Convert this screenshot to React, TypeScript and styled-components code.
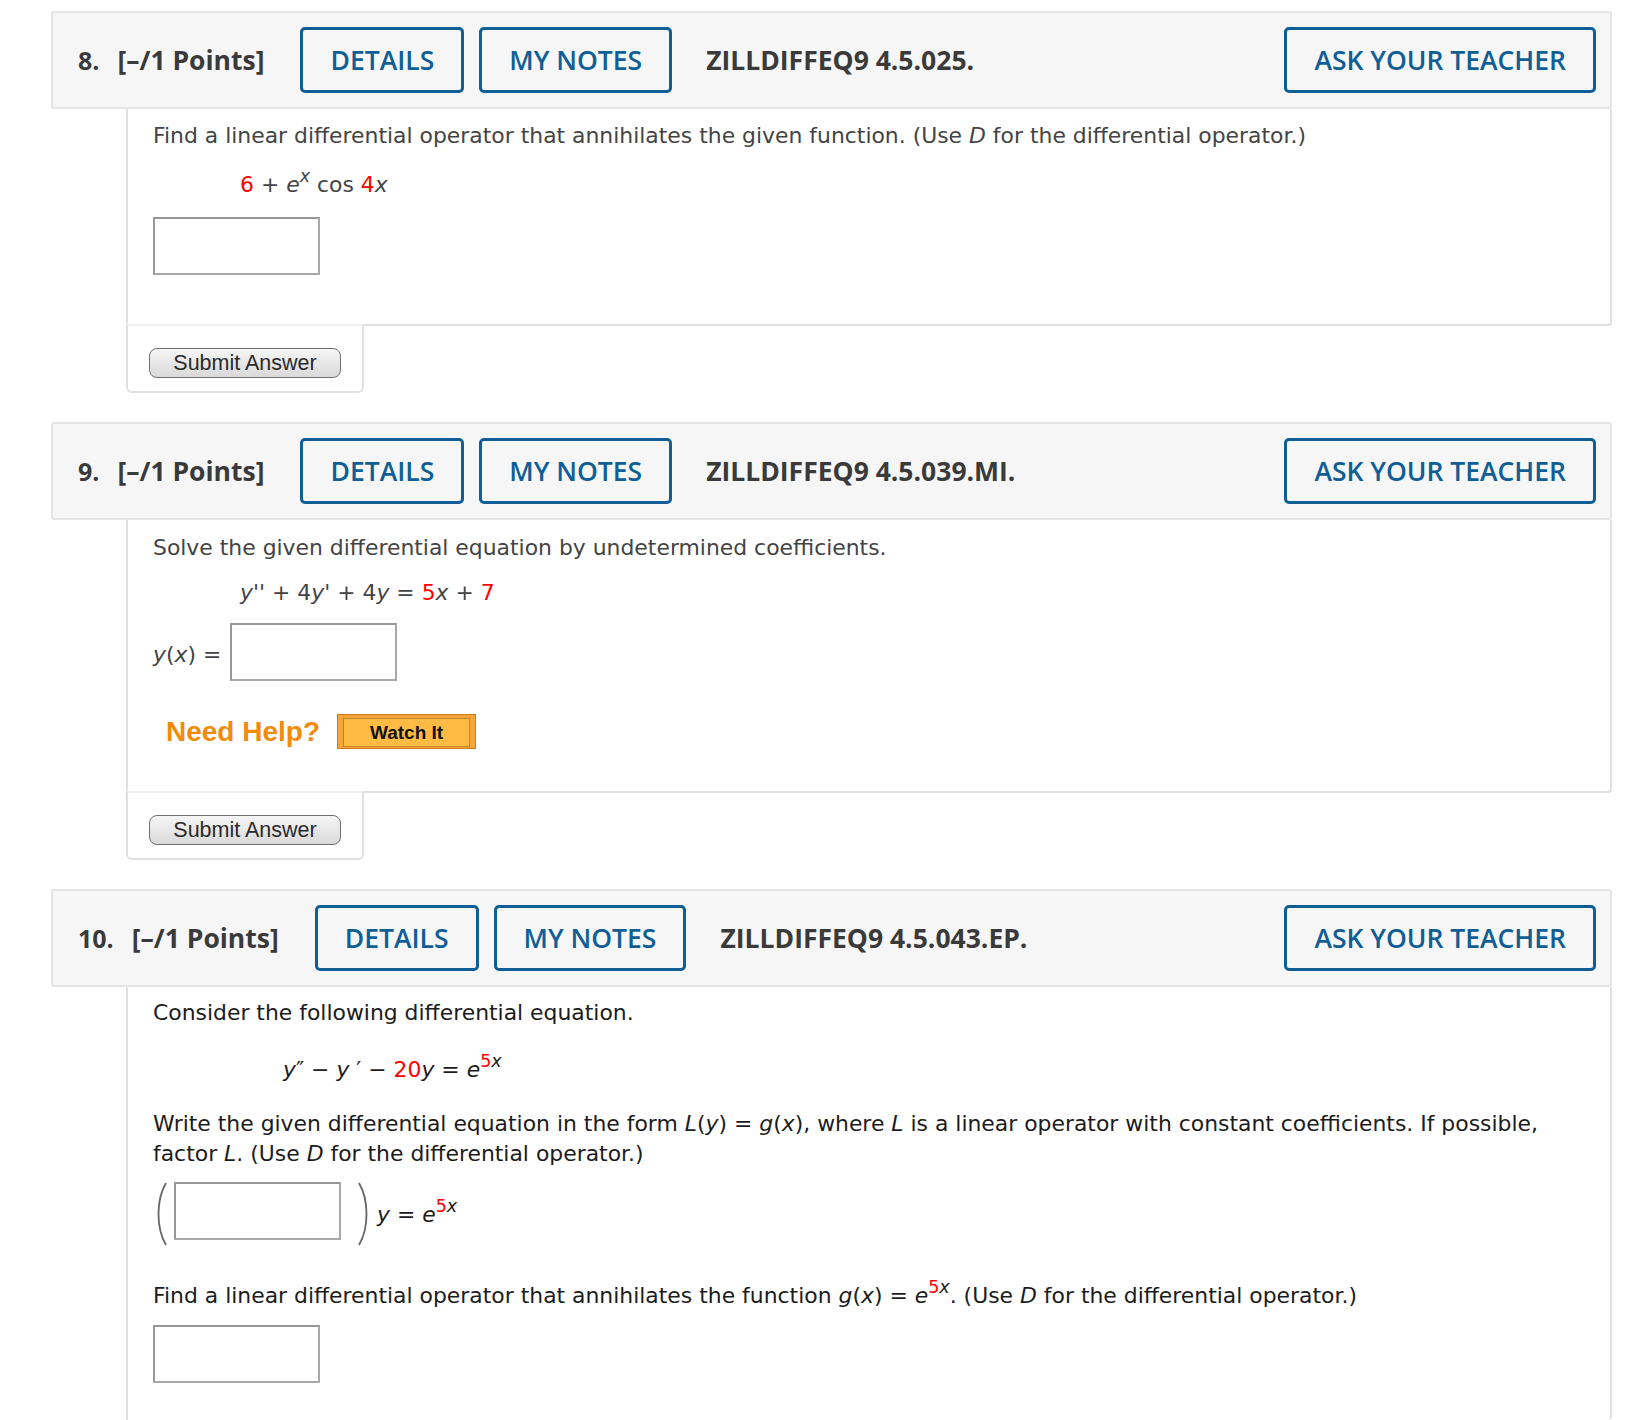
import React from 'react';
import styled, { createGlobalStyle } from 'styled-components';

const Global = createGlobalStyle`
  html, body {
    margin: 0;
    padding: 0;
    background: #fff;
  }
`;

const Page = styled.div`
  width: 1561px;
  padding: 11px 0 0 51px;
`;

const Question = styled.section`
  margin-bottom: 29px;
`;

const Header = styled.header`
  box-sizing: border-box;
  height: 98px;
  display: flex;
  align-items: center;
  padding: 0 14px 0 25px;
  background: #f6f6f6;
  border: 2px solid #e4e4e4;
  border-radius: 3px;
  font-family: 'Open Sans', 'DejaVu Sans', sans-serif;
  color: #3a3a3a;
`;

const QNum = styled.span`
  font-size: 25px;
  font-weight: 700;
  margin-right: 18px;
`;

const Points = styled.span`
  font-size: 26.5px;
  font-weight: 700;
  margin-right: 36px;
`;

const OutlineButton = styled.button<{ $right?: boolean }>`
  box-sizing: border-box;
  height: 66px;
  padding: 0 27px;
  margin-right: ${(p) => (p.$right ? '0' : '15px')};
  margin-left: ${(p) => (p.$right ? 'auto' : '0')};
  background: transparent;
  border: 3px solid #0f5e95;
  border-radius: 5px;
  color: #0f5e95;
  font-family: 'Open Sans', 'DejaVu Sans', sans-serif;
  font-size: 26.5px;
  font-weight: 600;
`;

const Code = styled.span`
  margin-left: 19px;
  font-size: 26.5px;
  font-weight: 700;
  color: #3a3a3a;
`;

const Body = styled.div<{ $dark?: boolean; $last?: boolean; $pt: number; $pb: number }>`
  margin-left: 75px;
  padding: ${(p) => p.$pt}px 25px ${(p) => p.$pb}px 25px;
  border: 2px solid #e0e0e0;
  border-top: none;
  ${(p) => (p.$last ? 'border-bottom: none;' : '')}
  border-radius: 0 0 4px 0;
  font-family: 'DejaVu Sans', Verdana, sans-serif;
  font-size: 21.9px;
  line-height: 30px;
  color: ${(p) => (p.$dark ? '#1c1c1c' : '#444')};
`;

const Prompt = styled.p<{ $gap?: number }>`
  margin: ${(p) => p.$gap ?? 0}px 0 0 0;
`;

const MathLine = styled.div<{ $indent: number; $gap: number }>`
  margin-top: ${(p) => p.$gap}px;
  padding-left: ${(p) => p.$indent}px;
  white-space: pre;
`;

const Red = styled.span`
  color: #f00;
`;

const Sup = styled.sup`
  font-size: 0.8em;
  line-height: 0;
  vertical-align: 0.55em;
`;

const AnswerBox = styled.input`
  box-sizing: border-box;
  display: block;
  width: 167px;
  height: 58px;
  margin: 0;
  border: 2px solid #979797;
  border-right-color: #a8a8a8;
  border-bottom-color: #a8a8a8;
  background: #fff;
`;

const AnswerRow = styled.div<{ $gap: number }>`
  margin-top: ${(p) => p.$gap}px;
  display: flex;
  align-items: center;
`;

const Label = styled.span`
  margin-right: 9px;
  padding-top: 6px;
  white-space: pre;
`;

const ParenRow = styled.div<{ $gap: number }>`
  margin-top: ${(p) => p.$gap}px;
  display: flex;
  align-items: flex-start;
`;

const Paren = styled.svg<{ $space: number }>`
  display: block;
  flex: none;
  margin-left: ${(p) => p.$space}px;
  margin-right: 5px;
`;

const ParenTail = styled.span`
  margin-top: 18px;
  white-space: pre;
`;

const HelpRow = styled.div`
  margin: 33px 0 0 13px;
  display: flex;
  align-items: center;
  gap: 17px;
`;

const NeedHelp = styled.span`
  font-family: 'Liberation Sans', Arial, sans-serif;
  font-size: 28px;
  font-weight: 700;
  line-height: 34px;
  color: #f28a0c;
`;

const WatchButton = styled.button`
  box-sizing: border-box;
  width: 139px;
  height: 35px;
  padding: 3px 5px;
  background: #f5a53a;
  border: 1px solid #d07a1c;
  cursor: pointer;
`;

const WatchInner = styled.span`
  display: flex;
  align-items: center;
  justify-content: center;
  height: 100%;
  background: #ffbb44;
  border: 1px solid #c2842a;
  font-family: 'Liberation Sans', Arial, sans-serif;
  font-size: 19px;
  font-weight: 700;
  color: #111;
`;

const SubmitTab = styled.div`
  box-sizing: border-box;
  width: 238px;
  height: 69px;
  margin: -2px 0 0 75px;
  padding: 22px 0 0 21px;
  background: #fff;
  border: 2px solid #e0e0e0;
  border-top-color: #f0f0f0;
  border-radius: 0 0 6px 6px;
`;

const SubmitButton = styled.button`
  box-sizing: border-box;
  width: 192px;
  height: 30px;
  padding: 0;
  background: linear-gradient(#f6f6f6, #d9d9d9);
  border: 1px solid #6f6f6f;
  border-radius: 8px;
  font-family: 'Liberation Sans', Arial, sans-serif;
  font-size: 21.5px;
  color: #2a2a2a;
`;

const LeftParen = ({ space = 0 }: { space?: number }) => (
  <Paren $space={space} width="16" height="64" viewBox="0 0 16 64">
    <path d="M13 1 C3 18 3 46 13 63" fill="none" stroke="#666" strokeWidth="1.8" />
  </Paren>
);

const RightParen = ({ space = 0 }: { space?: number }) => (
  <Paren $space={space} width="16" height="64" viewBox="0 0 16 64">
    <path d="M3 1 C13 18 13 46 3 63" fill="none" stroke="#666" strokeWidth="1.8" />
  </Paren>
);

const QHeader = ({ num, code }: { num: number; code: string }) => (
  <Header>
    <QNum>{num}.</QNum>
    <Points>[–/1 Points]</Points>
    <OutlineButton>DETAILS</OutlineButton>
    <OutlineButton>MY NOTES</OutlineButton>
    <Code>{code}</Code>
    <OutlineButton $right>ASK YOUR TEACHER</OutlineButton>
  </Header>
);

const Submit = () => (
  <SubmitTab>
    <SubmitButton>Submit Answer</SubmitButton>
  </SubmitTab>
);

export default function App() {
  return (
    <Page>
      <Global />

      <Question>
        <QHeader num={8} code="ZILLDIFFEQ9 4.5.025." />
        <Body $pt={12} $pb={49}>
          <Prompt>
            Find a linear differential operator that annihilates the given function. (Use <i>D</i> for the
            differential operator.)
          </Prompt>
          <MathLine $indent={87} $gap={19}>
            <Red>6</Red> + <i>e</i>
            <Sup>
              <i>x</i>
            </Sup>{' '}
            cos <Red>4</Red>
            <i>x</i>
          </MathLine>
          <AnswerRow $gap={17}>
            <AnswerBox />
          </AnswerRow>
        </Body>
        <Submit />
      </Question>

      <Question>
        <QHeader num={9} code="ZILLDIFFEQ9 4.5.039.MI." />
        <Body $pt={13} $pb={42}>
          <Prompt>Solve the given differential equation by undetermined coefficients.</Prompt>
          <MathLine $indent={87} $gap={15}>
            <i>y</i>'' + 4<i>y</i>' + 4<i>y</i> = <Red>5</Red>
            <i>x</i> + <Red>7</Red>
          </MathLine>
          <AnswerRow $gap={15}>
            <Label>
              <i>y</i>(<i>x</i>) =
            </Label>
            <AnswerBox />
          </AnswerRow>
          <HelpRow>
            <NeedHelp>Need Help?</NeedHelp>
            <WatchButton>
              <WatchInner>Watch It</WatchInner>
            </WatchButton>
          </HelpRow>
        </Body>
        <Submit />
      </Question>

      <Question>
        <QHeader num={10} code="ZILLDIFFEQ9 4.5.043.EP." />
        <Body $dark $last $pt={11} $pb={37}>
          <Prompt>Consider the following differential equation.</Prompt>
          <MathLine $indent={130} $gap={27}>
            <i>y</i>″ − <i>y</i> ′ − <Red>20</Red>
            <i>y</i> = <i>e</i>
            <Sup>
              <Red>5</Red>
              <i>x</i>
            </Sup>
          </MathLine>
          <Prompt $gap={24}>
            Write the given differential equation in the form <i>L</i>(<i>y</i>) = <i>g</i>(<i>x</i>), where{' '}
            <i>L</i> is a linear operator with constant coefficients. If possible, factor <i>L</i>. (Use{' '}
            <i>D</i> for the differential operator.)
          </Prompt>
          <ParenRow $gap={13}>
            <LeftParen />
            <AnswerBox />
            <RightParen space={15} />
            <ParenTail>
              <i>y</i> = <i>e</i>
              <Sup>
                <Red>5</Red>
                <i>x</i>
              </Sup>
            </ParenTail>
          </ParenRow>
          <Prompt $gap={35}>
            Find a linear differential operator that annihilates the function <i>g</i>(<i>x</i>) = <i>e</i>
            <Sup>
              <Red>5</Red>
              <i>x</i>
            </Sup>
            . (Use <i>D</i> for the differential operator.)
          </Prompt>
          <AnswerRow $gap={14}>
            <AnswerBox />
          </AnswerRow>
        </Body>
      </Question>
    </Page>
  );
}
